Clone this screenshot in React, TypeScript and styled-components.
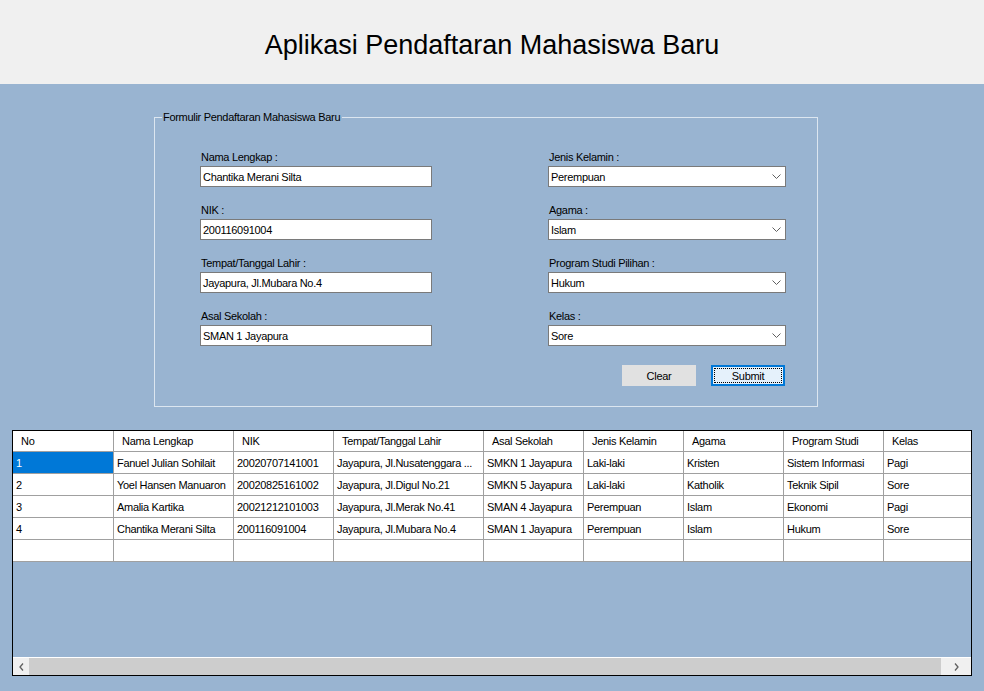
import React from "react";
import styled, { createGlobalStyle } from "styled-components";

const Global = createGlobalStyle`
  html, body { margin: 0; padding: 0; }
  body {
    background: #99b4d1;
    font-family: "Liberation Sans", Arial, sans-serif;
    font-size: 11px;
    letter-spacing: -0.3px;
    color: #000;
    width: 984px;
    height: 691px;
    overflow: hidden;
  }
`;

const Page = styled.div`
  width: 984px;
  height: 691px;
  display: flex;
  flex-direction: column;
  background: #99b4d1;
`;

const Header = styled.header`
  height: 84px;
  background: #f0f0f0;
  display: flex;
  align-items: center;
  justify-content: center;
  flex-shrink: 0;
`;

const Title = styled.h1`
  margin: 6px 0 0 0;
  font-family: "Liberation Sans", Arial, sans-serif;
  font-weight: normal;
  font-size: 27px;
  letter-spacing: 0;
  color: #000;
`;

const GroupBox = styled.fieldset`
  margin: 27px 0 0 154px;
  width: 664px;
  height: 296px;
  box-sizing: border-box;
  border: 1px solid #dce6f0;
  padding: 0;
  flex-shrink: 0;
`;

const Legend = styled.legend`
  margin-left: 7px;
  padding: 0 2px 0 1px;
  font-size: 11px;
  line-height: 13px;
  color: #000;
`;

const FormGrid = styled.div`
  display: grid;
  grid-template-columns: 232px 238px;
  column-gap: 116px;
  padding: 27px 0 0 45px;
`;

const Column = styled.div`
  display: flex;
  flex-direction: column;
  gap: 17px;
`;

const Field = styled.div`
  display: flex;
  flex-direction: column;
  gap: 2px;
`;

const Label = styled.label`
  line-height: 13px;
  height: 13px;
  padding-left: 1px;
`;

const TextBox = styled.div`
  height: 21px;
  box-sizing: border-box;
  border: 1px solid #7a7a7a;
  background: #fff;
  display: flex;
  align-items: center;
  padding-left: 2px;
  white-space: nowrap;
  overflow: hidden;
`;

const Combo = styled(TextBox)`
  justify-content: space-between;
  padding-right: 4px;
`;

const Chevron = () => (
  <svg width="9" height="5" viewBox="0 0 9 5">
    <path d="M0.5 0.5 L4.5 4.5 L8.5 0.5" fill="none" stroke="#606060" strokeWidth="1" />
  </svg>
);

const ButtonRow = styled.div`
  display: flex;
  justify-content: flex-end;
  gap: 15px;
  margin-top: 2px;
  padding-right: 1px;
`;

const Button = styled.button<{ $focused?: boolean }>`
  width: 74px;
  height: 21px;
  box-sizing: border-box;
  font-family: "Liberation Sans", Arial, sans-serif;
  font-size: 11px;
  letter-spacing: -0.3px;
  color: #000;
  padding: 0;
  background: ${(p) => (p.$focused ? "#e5f1fb" : "#e1e1e1")};
  border: ${(p) => (p.$focused ? "2px solid #0078d7" : "1px solid #e1e1e1")};
  outline: ${(p) => (p.$focused ? "1px dotted #000" : "none")};
  outline-offset: ${(p) => (p.$focused ? "-4px" : "0")};
`;

const GridBox = styled.div`
  margin: 23px 0 0 12px;
  width: 960px;
  height: 246px;
  box-sizing: border-box;
  border: 1px solid #000;
  background: #99b4d1;
  display: flex;
  flex-direction: column;
  overflow: hidden;
  flex-shrink: 0;
`;

const GridBody = styled.div`
  flex: 1;
  overflow: hidden;
`;

const cols = "101px 120px 100px 150px 100px 100px 100px 100px 100px";

const Row = styled.div<{ $head?: boolean }>`
  display: grid;
  grid-template-columns: ${cols};
  width: 971px;
  height: ${(p) => (p.$head ? "21px" : "22px")};
`;

const Cell = styled.div<{ $head?: boolean; $selected?: boolean }>`
  box-sizing: border-box;
  border-right: 1px solid #a0a0a0;
  border-bottom: 1px solid #a0a0a0;
  background: ${(p) => (p.$selected ? "#0078d7" : "#fff")};
  color: ${(p) => (p.$selected ? "#fff" : "#000")};
  padding-left: ${(p) => (p.$head ? "8px" : "3px")};
  display: flex;
  align-items: center;
  white-space: nowrap;
  overflow: hidden;
`;

const ScrollBar = styled.div`
  height: 18px;
  box-sizing: border-box;
  border-top: 1px solid #fff;
  background: #f0f0f0;
  display: flex;
  align-items: stretch;
  flex-shrink: 0;
`;

const Arrow = styled.div<{ $w: number }>`
  width: ${(p) => p.$w}px;
  display: flex;
  align-items: center;
  justify-content: center;
`;

const Thumb = styled.div`
  flex: 1;
  background: #cdcdcd;
`;

const headers = [
  "No",
  "Nama Lengkap",
  "NIK",
  "Tempat/Tanggal Lahir",
  "Asal Sekolah",
  "Jenis Kelamin",
  "Agama",
  "Program Studi",
  "Kelas",
];

const rows = [
  ["1", "Fanuel Julian Sohilait", "20020707141001", "Jayapura, Jl.Nusatenggara ...", "SMKN 1 Jayapura", "Laki-laki", "Kristen", "Sistem Informasi", "Pagi"],
  ["2", "Yoel Hansen Manuaron", "20020825161002", "Jayapura, Jl.Digul No.21", "SMKN 5 Jayapura", "Laki-laki", "Katholik", "Teknik Sipil", "Sore"],
  ["3", "Amalia Kartika", "20021212101003", "Jayapura, Jl.Merak No.41", "SMAN 4 Jayapura", "Perempuan", "Islam", "Ekonomi", "Pagi"],
  ["4", "Chantika Merani Silta", "200116091004", "Jayapura, Jl.Mubara No.4", "SMAN 1 Jayapura", "Perempuan", "Islam", "Hukum", "Sore"],
  ["", "", "", "", "", "", "", "", ""],
];

export default function App() {
  return (
    <Page>
      <Global />
      <Header>
        <Title>Aplikasi Pendaftaran Mahasiswa Baru</Title>
      </Header>
      <GroupBox>
        <Legend>Formulir Pendaftaran Mahasiswa Baru</Legend>
        <FormGrid>
          <Column>
            <Field>
              <Label>Nama Lengkap :</Label>
              <TextBox>Chantika Merani Silta</TextBox>
            </Field>
            <Field>
              <Label>NIK :</Label>
              <TextBox>200116091004</TextBox>
            </Field>
            <Field>
              <Label>Tempat/Tanggal Lahir :</Label>
              <TextBox>Jayapura, Jl.Mubara No.4</TextBox>
            </Field>
            <Field>
              <Label>Asal Sekolah :</Label>
              <TextBox>SMAN 1 Jayapura</TextBox>
            </Field>
          </Column>
          <Column>
            <Field>
              <Label>Jenis Kelamin :</Label>
              <Combo>Perempuan<Chevron /></Combo>
            </Field>
            <Field>
              <Label>Agama :</Label>
              <Combo>Islam<Chevron /></Combo>
            </Field>
            <Field>
              <Label>Program Studi Pilihan :</Label>
              <Combo>Hukum<Chevron /></Combo>
            </Field>
            <Field>
              <Label>Kelas :</Label>
              <Combo>Sore<Chevron /></Combo>
            </Field>
            <ButtonRow>
              <Button>Clear</Button>
              <Button $focused>Submit</Button>
            </ButtonRow>
          </Column>
        </FormGrid>
      </GroupBox>
      <GridBox>
        <GridBody>
          <Row $head>
            {headers.map((h) => (
              <Cell key={h} $head>{h}</Cell>
            ))}
          </Row>
          {rows.map((r, i) => (
            <Row key={i}>
              {r.map((c, j) => (
                <Cell key={j} $selected={i === 0 && j === 0}>{c}</Cell>
              ))}
            </Row>
          ))}
        </GridBody>
        <ScrollBar>
          <Arrow $w={16}>
            <svg width="5" height="8" viewBox="0 0 5 8">
              <path d="M4 0.5 L1 4 L4 7.5" fill="none" stroke="#606060" strokeWidth="1.3" />
            </svg>
          </Arrow>
          <Thumb />
          <Arrow $w={30}>
            <svg width="5" height="8" viewBox="0 0 5 8">
              <path d="M1 0.5 L4 4 L1 7.5" fill="none" stroke="#606060" strokeWidth="1.3" />
            </svg>
          </Arrow>
        </ScrollBar>
      </GridBox>
    </Page>
  );
}
